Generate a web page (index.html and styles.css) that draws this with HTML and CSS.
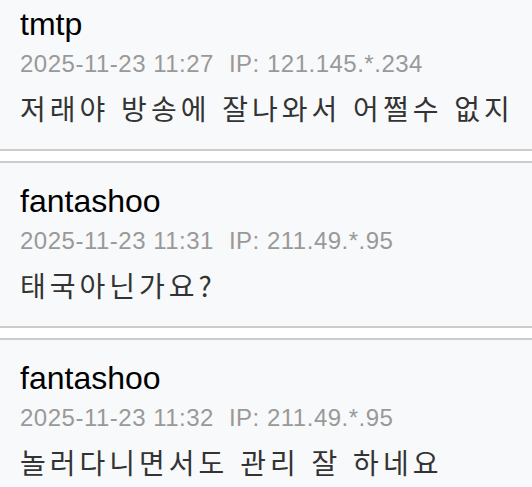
FILE: index.html
```html
<!DOCTYPE html>
<html lang="ko">
<head>
<meta charset="utf-8">
<title>댓글</title>
<link rel="stylesheet" href="styles.css">
</head>
<body>
<div class="comments">
  <div class="comment">
    <div class="name">tmtp</div>
    <div class="meta"><span class="date">2025-11-23 11:27</span><span class="ip">IP: 121.145.*.234</span></div>
    <div class="text">저래야 방송에 잘나와서 어쩔수 없지</div>
  </div>
  <div class="comment">
    <div class="name">fantashoo</div>
    <div class="meta"><span class="date">2025-11-23 11:31</span><span class="ip">IP: 211.49.*.95</span></div>
    <div class="text">태국아닌가요?</div>
  </div>
  <div class="comment">
    <div class="name">fantashoo</div>
    <div class="meta"><span class="date">2025-11-23 11:32</span><span class="ip">IP: 211.49.*.95</span></div>
    <div class="text">놀러다니면서도 관리 잘 하네요</div>
  </div>
</div>
</body>
</html>
```
FILE: styles.css
```css
html, body {
  margin: 0;
  padding: 0;
  background: #ffffff;
}
.comments {
  margin-top: -16px;
  display: flex;
  flex-direction: column;
  gap: 10px;
}
.comment {
  background: #f8f9fa;
  border-top: 2px solid #cccccc;
  border-bottom: 2px solid #cccccc;
  padding: 20px 20px 21px 20px;
}
.name {
  font-family: "Liberation Sans", Arial, sans-serif;
  font-size: 32px;
  line-height: 36px;
  color: #000000;
}
.meta {
  margin-top: 8px;
  font-family: "Liberation Sans", Arial, sans-serif;
  font-size: 24px;
  line-height: 28px;
  letter-spacing: 0.5px;
  color: #999999;
  white-space: nowrap;
}
.ip {
  margin-left: 15px;
}
.text {
  margin-top: 10px;
  font-family: "Noto Sans CJK KR", "Noto Sans", sans-serif;
  font-size: 28px;
  line-height: 40px;
  letter-spacing: 4px;
  color: #333333;
  white-space: nowrap;
}
```
